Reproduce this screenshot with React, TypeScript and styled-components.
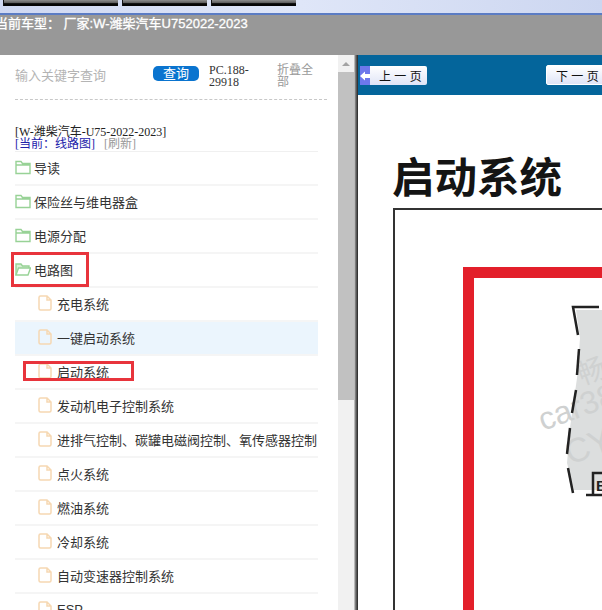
import styled, { createGlobalStyle } from 'styled-components'

const cjk = `"Liberation Sans", "Noto Sans CJK SC", sans-serif`
const serif = `"Liberation Serif", "Noto Sans CJK SC", serif`

const folders = ['导读', '保险丝与维电器盒', '电源分配']
const files = [
  '充电系统',
  '一键启动系统',
  '启动系统',
  '发动机电子控制系统',
  '进排气控制、碳罐电磁阀控制、氧传感器控制',
  '点火系统',
  '燃油系统',
  '冷却系统',
  '自动变速器控制系统',
  'ESP',
]

function FolderIcon({ open }: { open?: boolean }) {
  return (
    <svg width="16" height="15" viewBox="0 0 16 15" fill="none" stroke="#98d296" strokeWidth="1.4">
      {open ? (
        <>
          <path d="M1 13V2h5l1.5 2H14v2" fill="#d6efd3" />
          <path d="M1 13l2.500-7H15.500L13 13z" fill="#fff" />
        </>
      ) : (
        <path d="M1 13.500V1.500h5l1.500 2H15v10z M1 5h14" />
      )}
    </svg>
  )
}

function FileIcon() {
  return (
    <svg width="14" height="16" viewBox="0 0 14 16" fill="none" stroke="#f6d8b2" strokeWidth="1.500">
      <path d="M2.500 1H9l4 4v8.500a1.500 1.500 0 0 1-1.500 1.500h-9A1.500 1.500 0 0 1 1 13.500v-11A1.500 1.500 0 0 1 2.500 1z M9 1v4h4" />
    </svg>
  )
}

export default function App() {
  return (
    <Page>
      <GlobalStyle />
      <TopBar>
        <TopButton $width={114} />
        <TopButton $width={84} />
        <TopButton $width={84} />
      </TopBar>
      <CarBar>当前车型： 厂家:W-潍柴汽车U752022-2023</CarBar>
      <Body>
        <Side>
          <SearchRow>
            <SearchHint>输入关键字查询</SearchHint>
            <SearchButton>查询</SearchButton>
            <PartNo>PC.188-29918</PartNo>
            <Collapse>折叠全部</Collapse>
          </SearchRow>
          <Crumbs>
            <CrumbTitle>[W-潍柴汽车-U75-2022-2023]</CrumbTitle>
            <CrumbLine>
              <CrumbCurrent>[当前：线路图]</CrumbCurrent>
              <CrumbRefresh>[刷新]</CrumbRefresh>
            </CrumbLine>
          </Crumbs>
          <Tree>
            {folders.map((name) => (
              <Row key={name}>
                <FolderIcon />
                {name}
              </Row>
            ))}
            <Row>
              <FolderIcon open />
              电路图
              <Mark $left={11} $top={-2} $width={78} $height={35} />
            </Row>
            {files.map((name, i) => (
              <Row key={name} $child $active={i === 1}>
                <FileIcon />
                {name}
                {i === 2 && <Mark $left={23} $top={5} $width={111} $height={20} />}
              </Row>
            ))}
          </Tree>
        </Side>
        <Scrollbar>
          <ScrollArrow />
          <ScrollThumb />
        </Scrollbar>
        <Divider />
        <Viewer>
          <PageNav>
            <PrevButton>
              <PrevArrow>
                <svg width="10" height="10" viewBox="0 0 10 10" fill="#fff">
                  <path d="M0 5l5-4.500V3h5v4H5v2.500z" />
                </svg>
              </PrevArrow>
              上 一 页
            </PrevButton>
            <NextButton>下 一 页</NextButton>
          </PageNav>
          <Sheet>
            <SheetTitle>启动系统</SheetTitle>
            <Frame>
              <RedLoop>
                <svg width="128" height="240" viewBox="0 0 128 240" fill="none">
                  <path d="M102 32h26v180h-28l-7-27 3-35 7-50 3-40z" fill="#dcdede" />
                  <g fill="#cfd1d1" fontFamily={cjk}>
                    <text x="108" y="107" fontSize="28" transform="rotate(-20 108 107)">畅</text>
                    <text x="69" y="153" fontSize="32" transform="rotate(-20 69 153)">car38</text>
                    <text x="96" y="187" fontSize="34" transform="rotate(-20 96 187)">CY</text>
                  </g>
                  <g stroke="#222" strokeWidth="2.500">
                    <path d="M125 29H99l5 28" />
                    <path d="M105 71l-2 26" />
                    <path d="M102 112l-4 23" />
                    <path d="M96 150l-3 26" />
                    <path d="M94 190l5 25" />
                    <path d="M112 217h16" />
                    <path d="M119 217v-22h9" />
                  </g>
                  <text x="122" y="213" fontSize="15" fontWeight="700" fill="#222" fontFamily={cjk}>B</text>
                </svg>
              </RedLoop>
            </Frame>
          </Sheet>
        </Viewer>
      </Body>
    </Page>
  )
}

const GlobalStyle = createGlobalStyle`
  html, body {
    margin: 0;
    padding: 0;
    overflow: hidden;
  }
`

const Page = styled.div`
  width: 602px;
  height: 610px;
  display: flex;
  flex-direction: column;
  overflow: hidden;
  font-family: ${cjk};
  background: #fff;
`

const TopBar = styled.div`
  height: 13px;
  flex: none;
  display: flex;
  gap: 4px;
  padding-left: 3px;
  background: linear-gradient(90deg, #cfd8f2, #dfe6f8 50%, #ccd6f0);
  border-bottom: 2px solid #5b7cc4;
`

const TopButton = styled.div<{ $width: number }>`
  width: ${(p) => p.$width}px;
  height: 6px;
  background: linear-gradient(180deg, #8d8d8d 0, #5a5a5a 50%, #050505 60%);
  border-left: 1px solid #111;
`

const CarBar = styled.div`
  height: 40px;
  flex: none;
  box-sizing: border-box;
  text-indent: -5px;
  background: #989898;
  color: #fff;
  font-size: 13px;
  line-height: 17px;
  -webkit-text-stroke: 0.3px #fff;
  white-space: pre;
  overflow: hidden;
`

const Body = styled.div`
  flex: 1;
  min-height: 0;
  display: flex;
`

const Side = styled.div`
  position: relative;
  width: 338px;
  flex: none;
  padding: 0 20px 0 15px;
  box-sizing: border-box;
  overflow: hidden;
`

const SearchRow = styled.div`
  height: 45px;
  margin-right: -9px;
  box-sizing: border-box;
  display: flex;
  align-items: center;
  border-bottom: 1px dashed #c8c8c8;
`

const SearchHint = styled.div`
  width: 138px;
  flex: none;
  margin-top: -6px;
  font-size: 13px;
  color: #b4b4b4;
`

const SearchButton = styled.div`
  width: 46px;
  height: 15px;
  flex: none;
  margin-top: -7px;
  border-radius: 5px;
  background: #0a74cf;
  color: #fff;
  font-size: 13px;
  line-height: 15px;
  text-align: center;
`

const PartNo = styled.div`
  width: 68px;
  flex: none;
  margin-left: 10px;
  margin-top: -2px;
  font-family: ${serif};
  font-size: 12px;
  line-height: 12px;
  color: #333;
`

const Collapse = styled.div`
  width: 38px;
  flex: none;
  margin-top: -2px;
  font-size: 12px;
  line-height: 12px;
  color: #999;
`

const Crumbs = styled.div`
  height: 51px;
  box-sizing: border-box;
  padding-top: 26px;
  font-family: ${serif};
  font-size: 12px;
  line-height: 12px;
`

const CrumbTitle = styled.div`
  color: #222;
`

const CrumbLine = styled.div`
  display: flex;
  gap: 9px;
`

const CrumbCurrent = styled.span`
  color: #2222aa;
`

const CrumbRefresh = styled.span`
  color: #999;
`

const Tree = styled.div`
  display: flex;
  flex-direction: column;
  border-top: 1px solid #f0f0f0;
`

const Row = styled.div<{ $child?: boolean; $active?: boolean }>`
  position: relative;
  height: 34px;
  flex: none;
  box-sizing: border-box;
  display: flex;
  align-items: center;
  gap: ${(p) => (p.$child ? 5 : 3)}px;
  padding: 0 0 2px ${(p) => (p.$child ? 23 : 0)}px;
  border-bottom: 2px solid #f5f5f5;
  background: ${(p) => (p.$active ? '#ebf5fd' : 'transparent')};
  color: #333;
  font-size: 13px;
  white-space: nowrap;
`

const Mark = styled.div<{ $left: number; $top: number; $width: number; $height: number }>`
  position: absolute;
  left: ${(p) => p.$left - 15}px;
  top: ${(p) => p.$top}px;
  width: ${(p) => p.$width}px;
  height: ${(p) => p.$height}px;
  box-sizing: border-box;
  border: 3px solid #e8343c;
`

const Scrollbar = styled.div`
  width: 16px;
  flex: none;
  display: flex;
  flex-direction: column;
  background: #f1f1f1;
`

const ScrollArrow = styled.div`
  height: 17px;
  flex: none;
  display: flex;
  justify-content: center;
  align-items: center;
  &::before {
    content: '';
    border-left: 4px solid transparent;
    border-right: 4px solid transparent;
    border-bottom: 4px solid #a3a3a3;
  }
`

const ScrollThumb = styled.div`
  height: 328px;
  flex: none;
  background: #c1c1c1;
`

const Divider = styled.div`
  width: 4px;
  flex: none;
  background: linear-gradient(90deg, #d8d8d8 0, #777 40%, #222 100%);
`

const Viewer = styled.div`
  flex: 1;
  min-width: 0;
  display: flex;
  flex-direction: column;
`

const PageNav = styled.div`
  height: 40px;
  flex: none;
  display: flex;
  align-items: flex-start;
  padding: 11px 0 0 2px;
  box-sizing: border-box;
  background: #04659b;
  overflow: hidden;
`

const NavButton = styled.div`
  height: 19px;
  box-sizing: border-box;
  display: flex;
  align-items: center;
  flex: none;
  background: linear-gradient(180deg, #fff, #dfe4f7);
  color: #111;
  font-size: 12px;
  white-space: pre;
  border-radius: 2px;
`

const PrevButton = styled(NavButton)`
  width: 67px;
  gap: 9px;
`

const PrevArrow = styled.span`
  width: 10px;
  height: 19px;
  display: flex;
  align-items: center;
  justify-content: center;
  background: #6d78ec;
`

const NextButton = styled(NavButton)`
  width: 80px;
  margin-left: 119px;
  margin-top: -1px;
  height: 20px;
  padding-left: 9px;
  border: 1px solid #fff;
`

const Sheet = styled.div`
  flex: 1;
  min-height: 0;
  padding: 0 0 0 35px;
  overflow: hidden;
`

const SheetTitle = styled.div`
  height: 113px;
  box-sizing: border-box;
  padding-top: 55px;
  margin-left: -1px;
  color: #141414;
  font-size: 42.500px;
  line-height: 50px;
  font-weight: 700;
  font-family: "Noto Sans CJK SC", sans-serif;
`

const Frame = styled.div`
  height: 500px;
  box-sizing: border-box;
  border: 2px solid #333;
  border-right: 0;
  padding: 57px 0 0 68px;
`

const RedLoop = styled.div`
  height: 400px;
  box-sizing: border-box;
  border: 11px solid #e31f2a;
  border-right: 0;
  border-bottom: 0;
`
